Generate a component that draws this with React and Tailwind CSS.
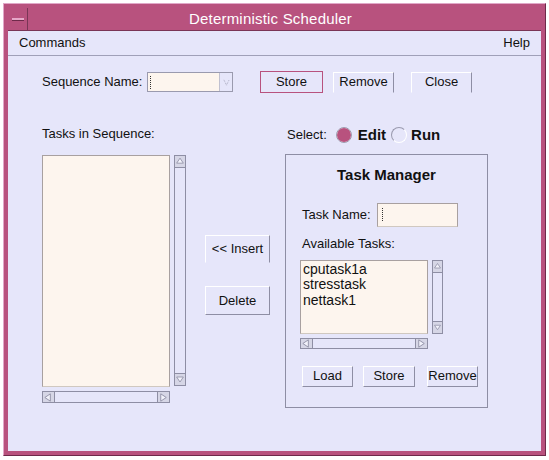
import { useState } from "react";

const font = { fontFamily: '"Liberation Sans", Arial, sans-serif' };

function Btn({ children, className = "" }) {
  return (
    <button
      className={
        "flex items-center justify-center bg-[#e6e6fa] text-[13px] text-[#111] border border-t-white border-l-white border-r-[#8e8ea4] border-b-[#8e8ea4] " +
        className
      }
    >
      {children}
    </button>
  );
}

function Arrow({ dir }) {
  const pts = {
    up: "2,8 6,2 10,8",
    down: "2,3 6,9 10,3",
    left: "8,2 2,6 8,10",
    right: "3,2 9,6 3,10",
  }[dir];
  return (
    <svg width="11" height="11" viewBox="0 0 12 12" className="block">
      <polygon points={pts} fill="#f2f2fb" stroke="#8e8ea4" strokeWidth="1" />
    </svg>
  );
}

function VScroll({ className = "" }) {
  return (
    <div className={"flex flex-col justify-between border border-[#8e8ea4] bg-[#e6e6fa] " + className}>
      <div className="h-[12px] border-b border-[#8e8ea4] bg-[#d6d6e6] flex items-center justify-center">
        <Arrow dir="up" />
      </div>
      <div className="h-[12px] border-t border-[#8e8ea4] bg-[#d6d6e6] flex items-center justify-center">
        <Arrow dir="down" />
      </div>
    </div>
  );
}

function HScroll({ className = "" }) {
  return (
    <div className={"flex justify-between border border-[#8e8ea4] bg-[#e6e6fa] " + className}>
      <div className="w-[12px] border-r border-[#8e8ea4] bg-[#d6d6e6] flex items-center justify-center">
        <Arrow dir="left" />
      </div>
      <div className="w-[12px] border-l border-[#8e8ea4] bg-[#d6d6e6] flex items-center justify-center">
        <Arrow dir="right" />
      </div>
    </div>
  );
}

export default function App() {
  const [mode, setMode] = useState("edit");
  const tasks = ["cputask1a", "stresstask", "nettask1"];

  return (
    <div className="w-[549px] h-[460px] bg-white pt-[3px] pl-[3px]" style={font}>
      <div className="w-[543px] h-[453px] flex flex-col bg-[#b8527e] border border-t-[#e0a8c8] border-l-[#e0a8c8] border-r-[#6e2a4a] border-b-[#6e2a4a] p-[4px]">
        {/* title bar */}
        <div className="h-[23px] flex items-stretch border-b border-[#7a3556]">
          <div className="w-[20px] border-r border-[#7a3556] flex items-center justify-center">
            <div className="w-[12px] h-[3px] bg-[#e6a8c8] border-b border-[#6e2a4a]" />
          </div>
          <div className="flex-1 flex items-center justify-center pr-[28px] text-white text-[15px] tracking-[0.2px]">
            Deterministic Scheduler
          </div>
        </div>
        {/* content */}
        <div className="flex-1 bg-[#e6e6fa] flex flex-col">
          <div className="h-[25px] flex items-center justify-between px-[11px] border-b border-[#a0a0b8] text-[13px] text-[#111]">
            <span>Commands</span>
            <span>Help</span>
          </div>
          <div className="pl-[34px] pt-[15px] text-[13px] text-[#111]">
            {/* row 1 */}
            <div className="flex items-center h-[22px]">
              <span className="w-[105px]">Sequence Name:</span>
              <div className="flex h-[20px] w-[86px] border border-[#9a9aae]">
                <div className="flex-1 bg-[#fdf5ee] flex items-center pl-[2px]">
                  <span className="w-[1px] h-[13px] border-l border-dotted border-[#333]" />
                </div>
                <div className="w-[13px] bg-[#e6e6fa] border-l border-[#c0c0d0] flex items-center justify-center">
                  <svg width="7" height="7" viewBox="0 0 8 8">
                    <path d="M1 1 L4 7 L7 1" fill="none" stroke="#a0a0b4" strokeWidth="1" strokeDasharray="1 1" />
                  </svg>
                </div>
              </div>
              <button className="ml-[27px] w-[63px] h-[22px] border border-[#b8527e] bg-[#e6e6fa] text-[13px]">
                Store
              </button>
              <Btn className="ml-[10px] w-[61px] h-[21px] border-b-transparent">Remove</Btn>
              <Btn className="ml-[17px] w-[61px] h-[21px] border-l-transparent border-b-transparent">Close</Btn>
            </div>
            {/* row 2 */}
            <div className="flex mt-[33px]">
              {/* left column */}
              <div className="w-[144px] flex flex-col">
                <div className="h-[15px] leading-[15px]">Tasks in Sequence:</div>
                <div className="flex mt-[14px]">
                  <div className="w-[128px] h-[232px] bg-[#fdf5ee] border border-[#a8a0a0] border-b-[#d0c8c0]" />
                  <VScroll className="ml-[4px] w-[12px] h-[231px]" />
                </div>
                <HScroll className="mt-[4px] w-[128px] h-[12px]" />
              </div>
              {/* middle column */}
              <div className="ml-[19px] w-[65px] flex flex-col">
                <Btn className="mt-[109px] h-[28px] w-[65px] border-l-transparent border-b-transparent">
                  &lt;&lt; Insert
                </Btn>
                <Btn className="mt-[23px] h-[29px] w-[65px]">Delete</Btn>
              </div>
              {/* right column */}
              <div className="ml-[15px] w-[203px] flex flex-col">
                <div className="h-[18px] flex items-center pl-[2px]">
                  <span className="mr-[9px]">Select:</span>
                  <button
                    onClick={() => setMode("edit")}
                    className="flex items-center gap-[6px] text-[15px] font-bold"
                  >
                    <span className="w-[16px] h-[16px] rounded-full border border-[#9a9aae] flex items-center justify-center bg-white">
                      {mode === "edit" && <span className="w-[14px] h-[14px] rounded-full bg-[#b8527e]" />}
                    </span>
                    Edit
                  </button>
                  <button
                    onClick={() => setMode("run")}
                    className="ml-[5px] flex items-center gap-[4px] text-[15px] font-bold"
                  >
                    <span className="w-[16px] h-[16px] rounded-full border border-[#9a9aae] border-b-white border-r-white flex items-center justify-center">
                      {mode === "run" && <span className="w-[14px] h-[14px] rounded-full bg-[#b8527e]" />}
                    </span>
                    Run
                  </button>
                </div>
                <div className="mt-[10px] w-[203px] h-[254px] border border-[#8e8ea4] flex flex-col pl-[14px]">
                  <div className="mt-[9px] text-center text-[15px] font-bold pr-[14px]">Task Manager</div>
                  <div className="mt-[16px] flex items-center pl-[2px]">
                    <span className="w-[75px]">Task Name:</span>
                    <div className="w-[81px] h-[24px] bg-[#fdf5ee] border border-[#a8a0a0] border-b-[#d0c8c0] flex items-center pl-[4px]">
                      <span className="w-[1px] h-[13px] border-l border-dotted border-[#333]" />
                    </div>
                  </div>
                  <div className="mt-[9px] pl-[2px] h-[16px] leading-[16px]">Available Tasks:</div>
                  <div className="flex mt-[8px]">
                    <div className="w-[128px] h-[74px] bg-[#fdf5ee] border border-[#a8a0a0] border-b-[#d0c8c0] pl-[2px] pt-[1px] text-[14px] leading-[15.5px]">
                      {tasks.map((t) => (
                        <div key={t}>{t}</div>
                      ))}
                    </div>
                    <VScroll className="ml-[4px] w-[11px] h-[74px]" />
                  </div>
                  <HScroll className="mt-[4px] w-[128px] h-[11px]" />
                  <div className="mt-[17px] flex pl-[2px]">
                    <Btn className="w-[51px] h-[21px]">Load</Btn>
                    <Btn className="ml-[10px] w-[52px] h-[21px]">Store</Btn>
                    <Btn className="ml-[12px] w-[51px] h-[21px]">Remove</Btn>
                  </div>
                </div>
              </div>
            </div>
          </div>
        </div>
      </div>
    </div>
  );
}
